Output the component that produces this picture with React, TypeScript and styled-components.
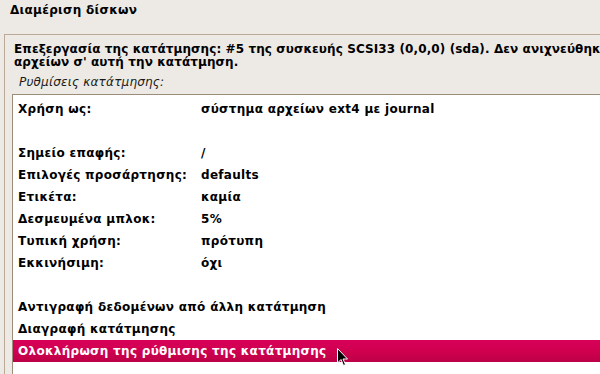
import React from 'react';
import styled, { createGlobalStyle } from 'styled-components';

const GlobalStyle = createGlobalStyle`
  html, body {
    margin: 0;
    padding: 0;
    background: #edeae5;
  }
  body {
    font-family: 'DejaVu Sans', 'Liberation Sans', sans-serif;
    font-size: 12px;
    color: #000;
  }
`;

const Page = styled.div`
  position: relative;
  width: 600px;
  height: 374px;
  overflow: hidden;
  background: #edeae5;
`;

const Title = styled.div`
  height: 34px;
  box-sizing: border-box;
  padding: 3px 0 0 10px;
  font-weight: bold;
  line-height: 14px;
  letter-spacing: 0.3px;
`;

const Frame = styled.div`
  margin-left: 4px;
  border-top: 1px solid #bba997;
  border-left: 1px solid #bba997;
  height: 340px;
  box-sizing: border-box;
  padding: 8px 0 0 0;
`;

const Description = styled.div`
  padding-left: 9px;
  font-weight: bold;
  line-height: 13px;
  letter-spacing: 0.1px;
  white-space: nowrap;
`;

const Caption = styled.div`
  padding: 6px 0 0 14px;
  font-style: italic;
  line-height: 14px;
  letter-spacing: 0.2px;
  color: #1a1a1a;
`;

const ListBox = styled.div`
  margin: 5px 0 0 7px;
  background: #fff;
  border-top: 1px solid #9c8c7b;
  border-left: 1px solid #9c8c7b;
  padding-top: 3px;
  height: 300px;
`;

const Row = styled.div<{ $selected?: boolean }>`
  display: grid;
  grid-template-columns: 183px 1fr;
  height: 22px;
  align-items: center;
  padding-left: 5px;
  font-weight: bold;
  letter-spacing: 0.3px;
  white-space: nowrap;
  color: ${(p) => (p.$selected ? '#fff' : '#000')};
  background: ${(p) =>
    p.$selected ? 'linear-gradient(to bottom, #d8005a 0%, #d0004f 50%, #bd0048 100%)' : 'transparent'};
`;

const Cursor = styled.svg`
  position: absolute;
  left: 337px;
  top: 348px;
`;

const rows: { label: string; value?: string; selected?: boolean }[] = [
  { label: 'Χρήση ως:', value: 'σύστημα αρχείων ext4 με journal' },
  { label: '' },
  { label: 'Σημείο επαφής:', value: '/' },
  { label: 'Επιλογές προσάρτησης:', value: 'defaults' },
  { label: 'Ετικέτα:', value: 'καμία' },
  { label: 'Δεσμευμένα μπλοκ:', value: '5%' },
  { label: 'Τυπική χρήση:', value: 'πρότυπη' },
  { label: 'Εκκινήσιμη:', value: 'όχι' },
  { label: '' },
  { label: 'Αντιγραφή δεδομένων από άλλη κατάτμηση' },
  { label: 'Διαγραφή κατάτμησης' },
  { label: 'Ολοκλήρωση της ρύθμισης της κατάτμησης', selected: true },
];

function App() {
  return (
    <Page>
      <GlobalStyle />
      <Title>Διαμέριση δίσκων</Title>
      <Frame>
        <Description>
          <div>Επεξεργασία της κατάτμησης: #5 της συσκευής SCSI33 (0,0,0) (sda). Δεν ανιχνεύθηκε σύστημα</div>
          <div>αρχείων σ' αυτή την κατάτμηση.</div>
        </Description>
        <Caption>Ρυθμίσεις κατάτμησης:</Caption>
        <ListBox>
          {rows.map((r, i) => (
            <Row key={i} $selected={r.selected}>
              <span>{r.label}</span>
              <span>{r.value ?? ''}</span>
            </Row>
          ))}
        </ListBox>
      </Frame>
      <Cursor width="12" height="19" viewBox="0 0 12 19">
        <path d="M0.5 0.5 L0.5 15 L4 11.5 L6.5 17.5 L8.5 16.5 L6 11 L10.5 11 Z" fill="#000" stroke="#fff" strokeWidth="1" />
      </Cursor>
    </Page>
  );
}

export default App;
